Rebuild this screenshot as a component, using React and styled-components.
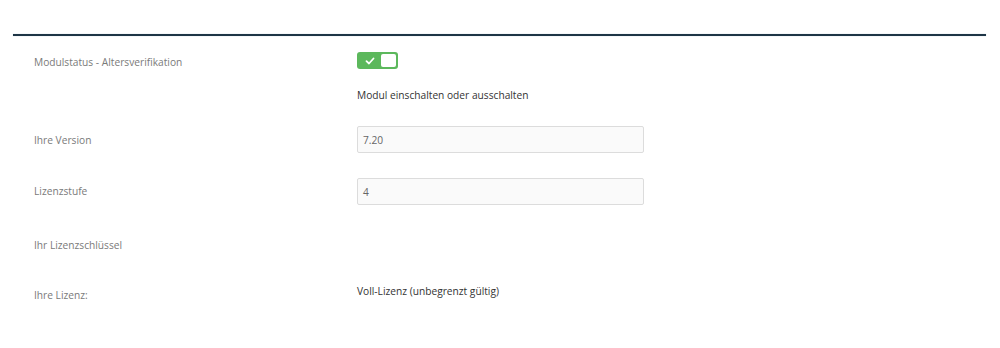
import React from 'react';
import styled, { createGlobalStyle } from 'styled-components';

const Global = createGlobalStyle`
  html, body {
    margin: 0;
    padding: 0;
    background: #ffffff;
    font-family: "Open Sans", "Noto Sans", sans-serif;
  }
`;

const Page = styled.div`
  width: 1000px;
  height: 348px;
  padding: 34px 14px 0 13px;
  box-sizing: border-box;
  background: #fff;
`;

const Rule = styled.div`
  height: 2px;
  background-color: #1e3546;
  box-shadow: 0 0 1px rgba(60, 110, 140, 0.5);
`;

const Form = styled.div`
  display: flex;
  flex-direction: column;
  padding-left: 21px;
`;

const Row = styled.div`
  display: grid;
  grid-template-columns: 323px 287px;
  align-items: start;
  height: ${(p) => p.h}px;
  padding-top: ${(p) => p.pt || 0}px;
  box-sizing: border-box;
`;

const Label = styled.div`
  font-size: 10.2px;
  color: #7a7a7a;
  line-height: 14px;
  padding-top: ${(p) => p.pt || 0}px;
`;

const Field = styled.div`
  display: flex;
  flex-direction: column;
  align-items: flex-start;
`;

const Toggle = styled.div`
  width: 41px;
  height: 17px;
  border-radius: 3px;
  background: #5cb85c;
  display: flex;
  align-items: center;
  padding: 2px;
  box-sizing: border-box;
`;

const Check = styled.div`
  flex: 1;
  display: flex;
  justify-content: center;
  align-items: center;
`;

const Knob = styled.div`
  width: 15px;
  height: 13px;
  background: #fff;
  border-radius: 2px;
`;

const Help = styled.div`
  font-size: 10.2px;
  color: #333;
  line-height: 14px;
  margin-top: ${(p) => p.mt || 0}px;
`;

const Input = styled.div`
  width: 287px;
  height: 27px;
  box-sizing: border-box;
  border: 1px solid #dcdcdc;
  background: #fafafa;
  border-radius: 2px;
  font-size: 10.2px;
  color: #666;
  padding: 0 5px;
  display: flex;
  align-items: center;
`;

const Value = styled.div`
  font-size: 10.2px;
  color: #333;
  line-height: 14px;
  padding-top: ${(p) => p.pt || 0}px;
`;

const App = () => (
  <>
    <Global />
    <Page>
      <Rule />
      <Form>
        <Row h={90} pt={16}>
          <Label pt={3}>Modulstatus - Altersverifikation</Label>
          <Field>
            <Toggle>
              <Check>
                <svg width="10" height="8" viewBox="0 0 10 8">
                  <path d="M1.5 4.2 L4 6.5 L8.5 1.5" fill="none" stroke="#fff" strokeWidth="1.8" strokeLinecap="round" strokeLinejoin="round" />
                </svg>
              </Check>
              <Knob />
            </Toggle>
            <Help mt={19}>Modul einschalten oder ausschalten</Help>
          </Field>
        </Row>
        <Row h={52}>
          <Label pt={7}>Ihre Version</Label>
          <Input>7.20</Input>
        </Row>
        <Row h={53}>
          <Label pt={6}>Lizenzstufe</Label>
          <Input>4</Input>
        </Row>
        <Row h={47}>
          <Label pt={7}>Ihr Lizenzschlüssel</Label>
          <div />
        </Row>
        <Row h={50}>
          <Label pt={10}>Ihre Lizenz:</Label>
          <Value pt={6}>Voll-Lizenz (unbegrenzt gültig)</Value>
        </Row>
      </Form>
    </Page>
  </>
);

export default App;
